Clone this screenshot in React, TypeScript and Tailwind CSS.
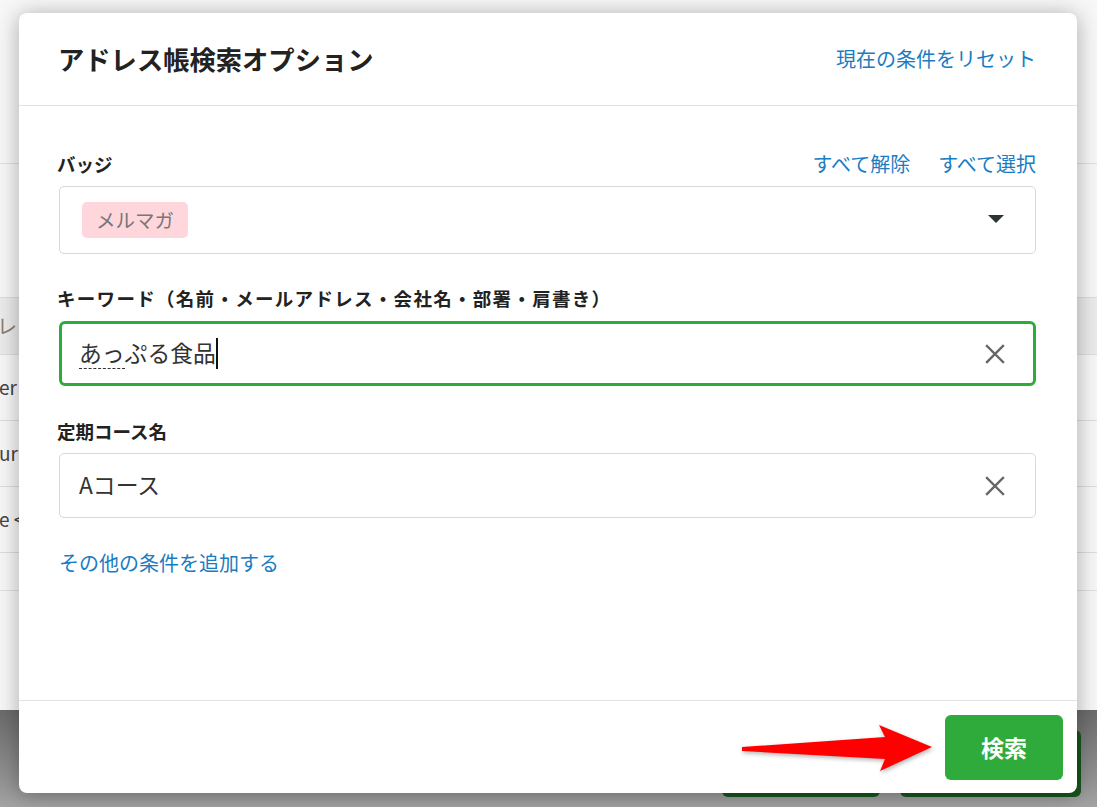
import React from 'react';

const ClearIcon: React.FC = () => (
  <svg width="20" height="20" viewBox="0 0 20 20" className="shrink-0">
    <path d="M2 2 L18 18 M18 2 L2 18" stroke="#666" strokeWidth="2.4" strokeLinecap="square" />
  </svg>
);

const FieldLabel: React.FC<{ children: React.ReactNode; wide?: boolean }> = ({ children, wide }) => (
  <div
    className={
      wide
        ? 'h-[28px] flex items-center text-[18.5px] font-bold text-[#222] leading-[28px] -ml-[2px] tracking-[1.3px]'
        : 'h-[28px] flex items-center text-[18.5px] font-bold text-[#222] leading-[28px] -ml-[2px]'
    }
  >
    {children}
  </div>
);

// background page rows peeking out on the left
const BackgroundPage: React.FC = () => (
  <div className="flex flex-col h-full">
    <div className="h-[710px] bg-[#f7f7f7] flex flex-col">
      <div className="h-[164px] border-b border-[#e0e0e0]" />
      <div className="h-[133px]" />
      <div className="h-[58px] bg-[#ebebeb] border-y border-[#dcdcdc] flex items-center text-[20px] text-[#8b7d70] -ml-[3px]">レ</div>
      <div className="h-[66px] border-b border-[#dcdcdc] flex items-center text-[19px] text-[#444] -ml-[1px]">er</div>
      <div className="h-[66px] border-b border-[#dcdcdc] flex items-center text-[19px] text-[#444] -ml-[1px]">ur</div>
      <div className="h-[66px] border-b border-[#dcdcdc] flex items-center text-[19px] text-[#444] -ml-[1px] whitespace-nowrap">e &lt;</div>
      <div className="h-[38px] border-b border-[#e0e0e0]" />
    </div>
    <div className="flex-1 bg-gradient-to-b from-[#6a6a6a] to-[#a3a3a3] flex gap-[20px] pl-[722px] pt-[20px]">
      <div className="w-[158px] h-[67px] rounded-[6px] bg-[#17561c]" />
      <div className="w-[181px] h-[67px] rounded-[6px] bg-[#17561c]" />
    </div>
  </div>
);

export default function App() {
  return (
    <div className="relative w-[1097px] h-[807px] overflow-hidden font-['Noto_Sans_CJK_JP','Noto_Sans',sans-serif]">
      <BackgroundPage />

      {/* modal */}
      <div className="absolute left-[19px] top-[13px] w-[1058px] h-[780px] bg-white rounded-[8px] shadow-[0_2px_22px_rgba(0,0,0,0.32)] flex flex-col">
        <div className="h-[93px] shrink-0 border-b border-[#e3e3e3] flex items-center justify-between pl-[39px] pr-[41px]">
          <h1 className="text-[26.3px] font-bold text-[#222] leading-none">アドレス帳検索オプション</h1>
          <button className="text-[20px] text-[#1a7cc1] leading-none">現在の条件をリセット</button>
        </div>

        <div className="flex-1 flex flex-col pl-[40px] pr-[41px] pt-[44px]">
          <div className="h-[28px] flex items-center justify-between">
            <FieldLabel>バッジ</FieldLabel>
            <div className="flex gap-[28px] text-[20px] leading-[28px] text-[#1a7cc1]">
              <button>すべて解除</button>
              <button>すべて選択</button>
            </div>
          </div>
          <div className="mt-[8px] h-[68px] border border-[#d8d8d8] rounded-[5px] flex items-center justify-between pl-[22px] pr-[31px]">
            <span className="h-[36px] px-[14px] rounded-[5px] bg-[#ffd6dc] text-[#777] text-[19.5px] flex items-center">メルマガ</span>
            <span className="w-0 h-0 border-l-[8px] border-r-[8px] border-t-[8px] border-l-transparent border-r-transparent border-t-[#2d3436] -mt-[3px]" />
          </div>

          <div className="mt-[30px]">
            <FieldLabel wide>キーワード（名前・メールアドレス・会社名・部署・肩書き）</FieldLabel>
          </div>
          <div className="mt-[9px] h-[65px] border-[3px] border-[#2eab3b] rounded-[6px] flex items-center justify-between pl-[17px] pr-[28px]">
            <div className="flex items-center text-[22.8px] text-[#333]">
              <span className="border-b border-dashed border-[#333] leading-[30px]">あっ</span>
              <span className="leading-[30px] border-b border-transparent">ぷる食品</span>
              <span className="w-[2px] h-[31px] bg-[#111]" />
            </div>
            <ClearIcon />
          </div>

          <div className="mt-[31px]">
            <FieldLabel>定期コース名</FieldLabel>
          </div>
          <div className="mt-[8px] h-[65px] border border-[#d8d8d8] rounded-[5px] flex items-center justify-between pl-[19px] pr-[30px]">
            <span className="text-[22.8px] text-[#333]">Aコース</span>
            <ClearIcon />
          </div>

          <div className="mt-[31px] h-[28px] flex items-center">
            <button className="text-[20px] leading-[28px] text-[#1a7cc1]">その他の条件を追加する</button>
          </div>
        </div>

        <div className="h-[93px] shrink-0 border-t border-[#e3e3e3] flex justify-end pt-[14px] pr-[14px]">
          <button className="w-[118px] h-[65px] rounded-[6px] bg-[#2eab3b] text-white text-[23px] font-bold">検索</button>
        </div>
      </div>

      {/* annotation arrow */}
      <svg className="absolute left-[735px] top-[718px] drop-shadow-[1px_2px_2px_rgba(0,0,0,0.3)]" width="205" height="60" viewBox="0 0 205 60">
        <path d="M7 29 L150 19 L144 7 L197 29 L145 53 L150 41 L7 33 Z" fill="#ff0000" />
      </svg>
    </div>
  );
}
